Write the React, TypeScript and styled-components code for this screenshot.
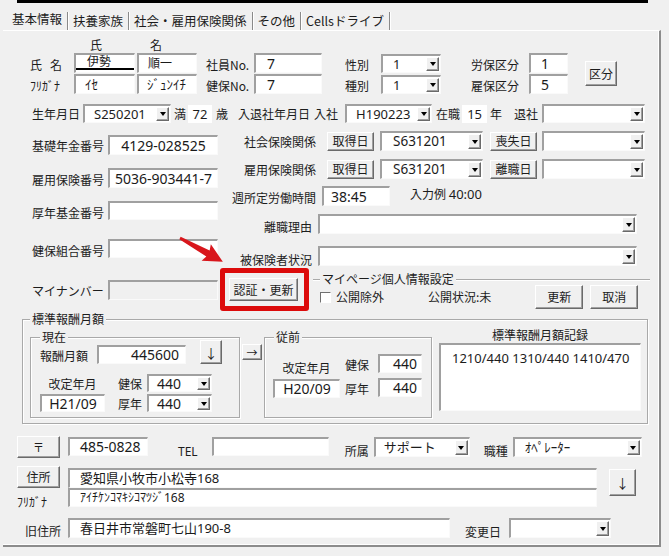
import React from 'react'
import styled, { createGlobalStyle, css } from 'styled-components'

const GlobalStyle = createGlobalStyle`
	html, body {
		margin: 0;
		padding: 0;
		background: #f0f0f0;
	}
	* {
		box-sizing: border-box;
	}
`

const sunken = css`
	background: #fff;
	border-style: solid;
	border-width: 2px 1px 1px 2px;
	border-color: #a0a0a0 #fafafa #fafafa #a0a0a0;
`

const raised = css`
	border: 1px solid;
	border-color: #ffffff #6a6a6a #6a6a6a #ffffff;
	box-shadow: inset -1px -1px 0 #a0a0a0;
	background: #f0f0f0;
`

const valueFont = `"Noto Sans", "Noto Sans CJK JP", sans-serif`

const Screen = styled.div`
	width: 669px;
	height: 556px;
	overflow: hidden;
	background: #f0f0f0;
	font-family: 'Noto Sans CJK JP', 'Noto Sans', sans-serif;
	font-size: 12px;
	color: #1c1c1c;
`

const TopRule = styled.div`
	margin-left: 17px;
	width: 631px;
	height: 3px;
	background: #000;
`

const TabStrip = styled.div`
	display: flex;
	height: 22px;
	margin-top: 5px;
	padding-left: 10px;
`

const Tab = styled.div<{ $active?: boolean }>`
	margin-top: 4px;
	height: 18px;
	padding: 0 5px;
	font-size: 12.5px;
	white-space: nowrap;
	line-height: ${(p) => (p.$active ? '14px' : '18px')};
	padding-left: ${(p) => (p.$active ? '2px' : '5px')};
	border-right: 1px solid #8a8a8a;
	box-shadow: 1px 0 0 #fff;
`

const Panel = styled.div`
	position: relative;
	margin-left: 3px;
	width: 658px;
	height: 517px;
	border-top: 1px solid #fff;
	border-right: 2px solid #8c8c8c;
	border-bottom: 2px solid #8c8c8c;
	box-shadow: inset -1px -1px 0 #fff;
`

/* ---------- generic parts ---------- */

type Box = { $w?: number; $h?: number; $ml?: number; $mt?: number }

const Label = styled.span<Box & { $right?: boolean; $center?: boolean }>`
	flex: none;
	display: block;
	white-space: nowrap;
	line-height: 16px;
	width: ${(p) => (p.$w ? `${p.$w}px` : 'auto')};
	margin-left: ${(p) => p.$ml ?? 0}px;
	margin-top: ${(p) => p.$mt ?? 0}px;
	text-align: ${(p) => (p.$right ? 'right' : p.$center ? 'center' : 'left')};
`

const TextBox = styled.div<
	Box & { $align?: string; $fs?: number; $pl?: number; $pr?: number; $off?: boolean; $ime?: boolean }
>`
	${sunken}
	flex: none;
	width: ${(p) => p.$w}px;
	height: ${(p) => p.$h ?? 20}px;
	margin-left: ${(p) => p.$ml ?? 0}px;
	margin-top: ${(p) => p.$mt ?? 0}px;
	padding: 0 ${(p) => p.$pr ?? 4}px 0 ${(p) => p.$pl ?? 4}px;
	font-family: ${valueFont};
	font-size: ${(p) => p.$fs ?? 14}px;
	line-height: ${(p) => (p.$h ?? 20) - 3}px;
	text-align: ${(p) => p.$align ?? 'left'};
	white-space: nowrap;
	overflow: hidden;
	color: #1a1a1a;
	${(p) => p.$off && 'background: #f0f0f0;'}
	${(p) =>
		p.$ime &&
		'line-height: 14px; box-shadow: inset 0 -2px 0 #fff, inset 0 -4px 0 #000;'}
`

const Plain = styled.div<Box>`
	flex: none;
	width: ${(p) => p.$w}px;
	height: 18px;
	margin-left: ${(p) => p.$ml ?? 0}px;
	background: #fff;
	text-align: center;
	font-family: ${valueFont};
	font-size: 13px;
	line-height: 18px;
`

const Combo = styled.div<Box>`
	${sunken}
	flex: none;
	display: flex;
	width: ${(p) => p.$w}px;
	height: ${(p) => p.$h ?? 20}px;
	margin-left: ${(p) => p.$ml ?? 0}px;
	margin-top: ${(p) => p.$mt ?? 0}px;
`

const ComboText = styled.span<{ $pl?: number; $fs?: number }>`
	flex: 1;
	min-width: 0;
	padding-left: ${(p) => p.$pl ?? 9}px;
	font-family: ${valueFont};
	font-size: ${(p) => p.$fs ?? 13}px;
	line-height: 16px;
	white-space: nowrap;
`

const DropBtn = styled.span`
	${raised}
	flex: none;
	width: 13px;
	margin: 1px;
	display: flex;
	align-items: center;
	justify-content: center;
	&::after {
		content: '';
		border-left: 3.5px solid transparent;
		border-right: 3.5px solid transparent;
		border-top: 4px solid #000;
	}
`

const Btn = styled.button<Box & { $fs?: number }>`
	${raised}
	flex: none;
	padding: 0;
	width: ${(p) => p.$w}px;
	height: ${(p) => p.$h ?? 20}px;
	margin-left: ${(p) => p.$ml ?? 0}px;
	margin-top: ${(p) => p.$mt ?? 0}px;
	font-family: 'Noto Sans CJK JP', sans-serif;
	font-size: ${(p) => p.$fs ?? 12}px;
	line-height: 1;
	color: #1c1c1c;
`

const Row = styled.div<{ $mt?: number; $ml?: number; $h?: number; $align?: string }>`
	display: flex;
	align-items: ${(p) => p.$align ?? 'center'};
	margin-top: ${(p) => p.$mt ?? 0}px;
	margin-left: ${(p) => p.$ml ?? 0}px;
	${(p) => p.$h && `height: ${p.$h}px;`}
`

const Col = styled.div<{ $w?: number; $ml?: number; $mt?: number }>`
	display: flex;
	flex-direction: column;
	flex: none;
	${(p) => p.$w && `width: ${p.$w}px;`}
	margin-left: ${(p) => p.$ml ?? 0}px;
	margin-top: ${(p) => p.$mt ?? 0}px;
`

const Group = styled.div<Box>`
	position: relative;
	flex: none;
	width: ${(p) => p.$w}px;
	height: ${(p) => p.$h}px;
	margin-left: ${(p) => p.$ml ?? 0}px;
	margin-top: ${(p) => p.$mt ?? 0}px;
	border: 1px solid #a9a9a9;
	box-shadow: inset 1px 1px 0 #fff, 1px 1px 0 #fff;
`

const Caption = styled.span<{ $left: number }>`
	position: absolute;
	top: -9px;
	left: ${(p) => p.$left}px;
	padding: 0 2px;
	line-height: 16px;
	background: #f0f0f0;
	white-space: nowrap;
`

/* ---------- specific sections ---------- */

const NameGrid = styled.div`
	display: grid;
	grid-template-columns: 44px 63px 69px 48px 91px 36px 90px 58px 56px 32px;
	grid-template-rows: 14px 20px 20px;
	row-gap: 1px;
	align-items: center;
	margin: 7px 0 0 27px;
`

const ColHead = styled.span<{ $pad: number }>`
	padding-left: ${(p) => p.$pad}px;
	line-height: 14px;
`

const Filler = styled.span`
	grid-column: 4 / -1;
`

const GridLabel = styled.span<{ $spread?: boolean }>`
	line-height: 16px;
	padding-top: 3px;
	white-space: nowrap;
	${(p) => p.$spread && 'letter-spacing: 8px;'}
`

const KubunBtn = styled(Btn)`
	grid-row: span 2;
`

const RedFrame = styled.div`
	flex: none;
	width: 89px;
	height: 43px;
	margin-left: 2px;
	padding: 5px 0 0 4px;
	border: 5px solid #dc0b0b;
	border-radius: 3px;
`

const TopLineGroup = styled.div`
	position: relative;
	flex: none;
	width: 337px;
	margin: 11px 0 0 4px;
	border-top: 1px solid #a9a9a9;
	box-shadow: inset 0 1px 0 #fff;
	padding-top: 5px;
`

const Check = styled.span`
	flex: none;
	width: 11px;
	height: 11px;
	background: #fff;
	border-style: solid;
	border-width: 1px;
	border-color: #707070 #fff #fff #707070;
`

const StdGroup = styled(Group)`
	display: flex;
	align-items: flex-start;
	padding: 17px 0 0 7px;
`

const RecordTitle = styled.div`
	margin-top: -9px;
	line-height: 14px;
	text-align: center;
`

const RecordArea = styled.div`
	${sunken}
	margin-top: 1px;
	height: 68px;
	padding: 5px 4px 0 11px;
	font-family: ${valueFont};
	font-size: 13px;
	line-height: 16px;
`

const Arrow = styled.svg`
	position: absolute;
	left: 170px;
	top: 200px;
`

export default function App() {
	return (
		<Screen>
			<GlobalStyle />
			<TopRule />
			<TabStrip>
				<Tab $active>基本情報</Tab>
				<Tab>扶養家族</Tab>
				<Tab>社会・雇用保険関係</Tab>
				<Tab>その他</Tab>
				<Tab>Cellsドライブ</Tab>
			</TabStrip>

			<Panel>
				<NameGrid>
					<span />
					<ColHead $pad={16}>氏</ColHead>
					<ColHead $pad={13}>名</ColHead>
					<Filler />

					<GridLabel $spread>氏名</GridLabel>
					<TextBox $w={61} $fs={12} $pl={11} $ime>伊勢</TextBox>
					<TextBox $w={60} $fs={12} $pl={9}>順一</TextBox>
					<GridLabel>社員No.</GridLabel>
					<TextBox $w={68} $pl={11}>7</TextBox>
					<GridLabel>性別</GridLabel>
					<Combo $w={60} $h={19}>
						<ComboText $pl={10}>1</ComboText>
						<DropBtn />
					</Combo>
					<GridLabel>労保区分</GridLabel>
					<TextBox $w={39} $pl={10}>1</TextBox>
					<KubunBtn $w={32} $h={25}>区分</KubunBtn>

					<GridLabel>ﾌﾘｶﾞﾅ</GridLabel>
					<TextBox $w={61} $fs={13} $pl={9}>ｲｾ</TextBox>
					<TextBox $w={60} $fs={13} $pl={8}>ｼﾞｭﾝｲﾁ</TextBox>
					<GridLabel>健保No.</GridLabel>
					<TextBox $w={68} $pl={11}>7</TextBox>
					<GridLabel>種別</GridLabel>
					<Combo $w={60} $h={19}>
						<ComboText $pl={10}>1</ComboText>
						<DropBtn />
					</Combo>
					<GridLabel>雇保区分</GridLabel>
					<TextBox $w={39} $pl={10}>5</TextBox>
				</NameGrid>

				<Row $mt={10} $ml={29} $h={19}>
					<Label $w={51}>生年月日</Label>
					<Combo $w={88} $h={19}>
						<ComboText>S250201</ComboText>
						<DropBtn />
					</Combo>
					<Label $ml={3}>満</Label>
					<Plain $w={24} $ml={2}>72</Plain>
					<Label $ml={4}>歳</Label>
					<Label $ml={10}>入退社年月日</Label>
					<Label $ml={4}>入社</Label>
					<Combo $w={87} $h={19} $ml={7}>
						<ComboText>H190223</ComboText>
						<DropBtn />
					</Combo>
					<Label $ml={4}>在職</Label>
					<Plain $w={25} $ml={2}>15</Plain>
					<Label $ml={3}>年</Label>
					<Label $ml={12}>退社</Label>
					<Combo $w={103} $h={19} $ml={4}>
						<ComboText />
						<DropBtn />
					</Combo>
				</Row>

				<Row $mt={8} $align="flex-start">
					<Col $w={186} $ml={29}>
						<Row $mt={4}>
							<Label $w={76} $mt={2}>基礎年金番号</Label>
							<TextBox $w={110} $align="center">4129-028525</TextBox>
						</Row>
						<Row $mt={13}>
							<Label $w={76} $mt={4}>雇用保険番号</Label>
							<TextBox $w={110} $align="center">5036-903441-7</TextBox>
						</Row>
						<Row $mt={11}>
							<Label $w={76} $mt={6}>厚年基金番号</Label>
							<TextBox $w={110} $h={19} />
						</Row>
						<Row $mt={16}>
							<Label $w={76} $mt={6}>健保組合番号</Label>
							<TextBox $w={110} $h={19} />
						</Row>
					</Col>

					<Col $ml={12}>
						<Row>
							<Label $w={86} $right $mt={2}>社会保険関係</Label>
							<Btn $w={47} $h={19} $ml={11}>取得日</Btn>
							<Combo $w={103} $ml={6}>
								<ComboText $pl={11} $fs={13.5}>S631201</ComboText>
								<DropBtn />
							</Combo>
							<Btn $w={47} $h={19} $ml={7}>喪失日</Btn>
							<Combo $w={103} $ml={5}>
								<ComboText />
								<DropBtn />
							</Combo>
						</Row>
						<Row $mt={8}>
							<Label $w={86} $right $mt={2}>雇用保険関係</Label>
							<Btn $w={47} $h={19} $ml={11}>取得日</Btn>
							<Combo $w={103} $ml={6}>
								<ComboText $pl={11} $fs={13.5}>S631201</ComboText>
								<DropBtn />
							</Combo>
							<Btn $w={47} $h={19} $ml={7}>離職日</Btn>
							<Combo $w={103} $ml={5}>
								<ComboText />
								<DropBtn />
							</Combo>
						</Row>
						<Row $mt={7}>
							<Label $w={86} $right $mt={3}>週所定労働時間</Label>
							<TextBox $w={68} $ml={6} $pl={7}>38:45</TextBox>
							<Label $ml={20} $mt={-4}>
								入力例 <span style={{ fontFamily: valueFont, fontSize: 13 }}>40:00</span>
							</Label>
						</Row>
						<Row $mt={7}>
							<Label $w={82} $right $mt={6}>離職理由</Label>
							<Combo $w={319} $ml={6}>
								<ComboText />
								<DropBtn />
							</Combo>
						</Row>
						<Row $mt={9}>
							<Label $w={82} $right $mt={8}>被保険者状況</Label>
							<Combo $w={319} $ml={6}>
								<ComboText />
								<DropBtn />
							</Combo>
						</Row>
					</Col>
				</Row>

				<Row $align="flex-start" $h={43}>
					<Label $w={76} $ml={29} $mt={15}>マイナンバー</Label>
					<TextBox $w={110} $mt={12} $off />
					<RedFrame>
						<Btn $w={69} $h={23}>認証・更新</Btn>
					</RedFrame>
					<TopLineGroup>
						<Caption $left={7}>マイページ個人情報設定</Caption>
						<Row $h={24}>
							<Check style={{ marginLeft: 7 }} />
							<Label $ml={5}>公開除外</Label>
							<Label $ml={44}>公開状況:未</Label>
							<Btn $w={48} $h={24} $ml={44}>更新</Btn>
							<Btn $w={48} $h={24} $ml={7}>取消</Btn>
						</Row>
					</TopLineGroup>
				</Row>

				<StdGroup $w={626} $h={105} $ml={19} $mt={8}>
					<Caption $left={7}>標準報酬月額</Caption>

					<Group $w={210} $h={81}>
						<Caption $left={9}>現在</Caption>
						<Row $mt={2} $ml={9} $align="flex-end">
							<Label $w={57}>報酬月額</Label>
							<TextBox $w={89} $h={19} $align="right" $pr={6}>445600</TextBox>
							<Btn $w={22} $h={24} $ml={14} $fs={13}>↓</Btn>
						</Row>
						<Row $mt={7} $align="flex-start">
							<Col $w={65} $ml={9}>
								<Label $center $mt={5}>改定年月</Label>
								<TextBox $w={65} $h={18} $mt={2} $align="center">H21/09</TextBox>
							</Col>
							<Col $ml={13}>
								<Row $mt={3} $align="flex-end">
									<Label $w={29}>健保</Label>
									<Combo $w={65} $h={18}>
										<ComboText $pl={8} $fs={14}>440</ComboText>
										<DropBtn />
									</Combo>
								</Row>
								<Row $mt={2} $align="flex-end">
									<Label $w={29}>厚年</Label>
									<Combo $w={65} $h={18}>
										<ComboText $pl={8} $fs={14}>440</ComboText>
										<DropBtn />
									</Combo>
								</Row>
							</Col>
						</Row>
					</Group>

					<Btn $w={20} $h={16} $ml={2} $mt={7} $fs={11}>→</Btn>

					<Group $w={168} $h={81} $ml={2}>
						<Caption $left={9}>従前</Caption>
						<Row $align="flex-start">
							<Col $w={67} $ml={8}>
								<Label $center $mt={22}>改定年月</Label>
								<TextBox $w={67} $h={19} $mt={3} $align="center">H20/09</TextBox>
							</Col>
							<Col $ml={5}>
								<Row $mt={16} $align="flex-end">
									<Label $w={33}>健保</Label>
									<TextBox $w={44} $h={19} $align="right" $pr={4}>440</TextBox>
								</Row>
								<Row $mt={5} $align="flex-end">
									<Label $w={33}>厚年</Label>
									<TextBox $w={44} $h={19} $align="right" $pr={4}>440</TextBox>
								</Row>
							</Col>
						</Row>
					</Group>

					<Col $w={202} $ml={7}>
						<RecordTitle>標準報酬月額記録</RecordTitle>
						<RecordArea>1210/440 1310/440 1410/470</RecordArea>
					</Col>
				</StdGroup>

				<Row $mt={12} $ml={14} $align="flex-start">
					<Btn $w={43} $h={22} $fs={11}>〒</Btn>
					<TextBox $w={80} $h={19} $ml={8} $mt={1} $pl={10}>485-0828</TextBox>
					<Label $ml={30} $mt={8} style={{ fontFamily: valueFont }}>TEL</Label>
					<TextBox $w={117} $h={19} $ml={14} $mt={1} />
					<Label $ml={16} $mt={7}>所属</Label>
					<Combo $w={96} $ml={5} $mt={1}>
						<ComboText $pl={8}>サポート</ComboText>
						<DropBtn />
					</Combo>
					<Label $ml={14} $mt={7}>職種</Label>
					<Combo $w={129} $ml={5} $mt={1}>
						<ComboText $pl={10}>ｵﾍﾟﾚｰﾀｰ</ComboText>
						<DropBtn />
					</Combo>
				</Row>

				<Row $mt={6} $ml={14} $align="flex-start">
					<Col>
						<Btn $w={43} $h={22}>住所</Btn>
						<Label $mt={6}>ﾌﾘｶﾞﾅ</Label>
					</Col>
					<Col $ml={8} $mt={2}>
						<TextBox $w={529} $h={20} $fs={13} $pl={10}>愛知県小牧市小松寺168</TextBox>
						<TextBox $w={529} $h={19} $fs={12} $pl={10}>ｱｲﾁｹﾝｺﾏｷｼｺﾏﾂｼﾞ168</TextBox>
					</Col>
					<Btn $w={27} $h={27} $ml={12} $mt={3} $fs={13}>↓</Btn>
				</Row>

				<Row $mt={8} $ml={22} $align="flex-start">
					<Label $w={43} $mt={5}>旧住所</Label>
					<TextBox $w={382} $fs={13} $pl={10}>春日井市常磐町七山190-8</TextBox>
					<Label $ml={15} $mt={6}>変更日</Label>
					<Combo $w={102} $ml={8}>
						<ComboText />
						<DropBtn />
					</Combo>
				</Row>

				<Arrow width={62} height={46} viewBox="0 0 62 46">
					<g transform="translate(7 7) rotate(29)">
						<polygon points="0,-1.3 32,-3.4 30,-9.5 49,0 30,9.5 32,3.4 0,1.3" fill="#d8161c" />
					</g>
				</Arrow>
			</Panel>
		</Screen>
	)
}
